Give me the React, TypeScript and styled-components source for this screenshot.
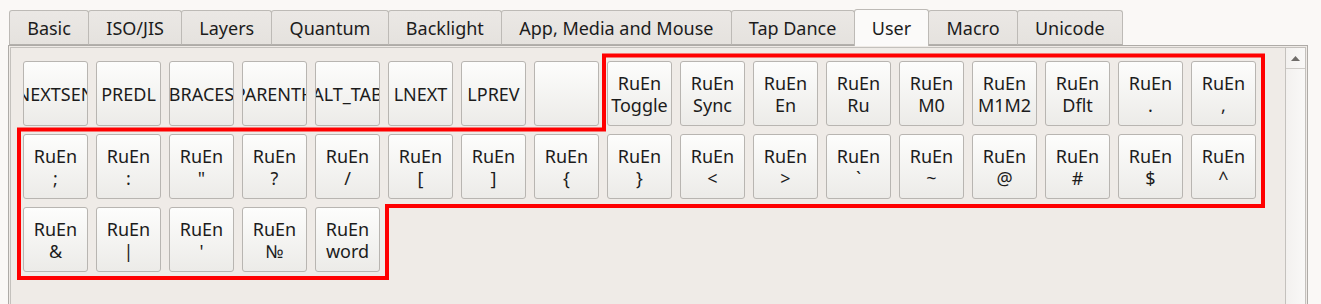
import styled, { createGlobalStyle } from "styled-components";

const GlobalStyle = createGlobalStyle`
  html, body {
    margin: 0;
    padding: 0;
    background: #faf8f6;
    overflow: hidden;
  }
  body {
    font-family: "Noto Sans", "DejaVu Sans", sans-serif;
    color: #1e1e1e;
  }
`;

const Page = styled.div`
  position: relative;
  width: 1321px;
  height: 304px;
  padding: 8px 13px 0 8px;
  box-sizing: border-box;
  display: flex;
  flex-direction: column;
`;

const TabBar = styled.div`
  display: flex;
  align-items: flex-end;
  height: 37px;
  padding-left: 1px;
  position: relative;
  z-index: 1;
`;

const Tab = styled.div<{ $active?: boolean }>`
  height: ${({ $active }) => ($active ? "37px" : "35px")};
  margin-bottom: ${({ $active }) => ($active ? "-1px" : "0")};
  margin-left: -1px;
  padding: 0 17.2px;
  box-sizing: border-box;
  display: flex;
  align-items: center;
  justify-content: center;
  font-size: 18px;
  white-space: nowrap;
  border: 1px solid #bdbab6;
  border-bottom: ${({ $active }) => ($active ? "none" : "1px solid #b3b0ac")};
  border-radius: 3px 3px 0 0;
  background: ${({ $active }) =>
    $active ? "#fbfaf9" : "linear-gradient(#ebe8e5, #e5e2de)"};
  color: #1c1c1c;
  &:first-child {
    margin-left: 0;
  }
`;

const Panel = styled.div`
  flex: 1;
  border: 1px solid #aeaba7;
  border-bottom: none;
  padding: 1px 1px 0 1px;
  background: #efebe7;
  display: flex;
`;

const ScrollFrame = styled.div`
  flex: 1;
  border: 1px solid #c4c1bd;
  border-bottom: none;
  display: flex;
`;

const KeyGrid = styled.div`
  flex: 1;
  padding: 13px 0 0 12px;
  display: grid;
  grid-template-columns: repeat(17, 65px);
  grid-auto-rows: 65px;
  gap: 8px;
  align-content: start;
`;

const Key = styled.div`
  width: 65px;
  height: 65px;
  box-sizing: border-box;
  border: 1px solid #b8b5b1;
  border-radius: 3px;
  background: linear-gradient(#fdfdfc, #ecebe8);
  display: flex;
  flex-direction: column;
  align-items: center;
  justify-content: center;
  overflow: hidden;
  font-size: 18px;
  line-height: 22px;
  white-space: nowrap;
  color: #1c1c1c;
`;

const ScrollBar = styled.div`
  width: 19px;
  border-left: 1px solid #c4c1bd;
  background: linear-gradient(90deg, #f3f1ef, #f9f8f7);
  display: flex;
  flex-direction: column;
`;

const ScrollButton = styled.div`
  height: 20px;
  border-bottom: 1px solid #cfccc8;
  display: flex;
  align-items: center;
  justify-content: center;
`;

const Overlay = styled.svg`
  position: absolute;
  left: 0;
  top: 0;
  pointer-events: none;
`;

const tabs = [
  "Basic",
  "ISO/JIS",
  "Layers",
  "Quantum",
  "Backlight",
  "App, Media and Mouse",
  "Tap Dance",
  "User",
  "Macro",
  "Unicode",
];

const keys: string[][] = [
  ["NEXTSEN"],
  ["PREDL"],
  ["BRACES"],
  ["PARENTH"],
  ["ALT_TAB"],
  ["LNEXT"],
  ["LPREV"],
  [""],
  ...[
    "Toggle",
    "Sync",
    "En",
    "Ru",
    "M0",
    "M1M2",
    "Dflt",
    ".",
    ",",
    ";",
    ":",
    '"',
    "?",
    "/",
    "[",
    "]",
    "{",
    "}",
    "<",
    ">",
    "`",
    "~",
    "@",
    "#",
    "$",
    "^",
    "&",
    "|",
    "'",
    "№",
    "word",
  ].map((s) => ["RuEn", s]),
];

function App() {
  return (
    <Page>
      <GlobalStyle />
      <TabBar>
        {tabs.map((t) => (
          <Tab key={t} $active={t === "User"}>
            {t}
          </Tab>
        ))}
      </TabBar>
      <Panel>
        <ScrollFrame>
          <KeyGrid>
            {keys.map((lines, i) => (
              <Key key={i}>
                {lines.map((l, j) => (
                  <span key={j}>{l}</span>
                ))}
              </Key>
            ))}
          </KeyGrid>
          <ScrollBar>
            <ScrollButton>
              <svg width="9" height="5" viewBox="0 0 9 5">
                <path d="M0 5 L4.5 0 L9 5 Z" fill="#6f6c69" />
              </svg>
            </ScrollButton>
          </ScrollBar>
        </ScrollFrame>
      </Panel>
      <Overlay width="1321" height="304" viewBox="0 0 1321 304">
        <polygon
          points="604,55.5 1263,55.5 1263,206 387,206 387,278 19,278 19,129.5 604,129.5"
          fill="none"
          stroke="#ff0000"
          strokeWidth="4"
          strokeLinejoin="miter"
        />
      </Overlay>
    </Page>
  );
}

export default App;
